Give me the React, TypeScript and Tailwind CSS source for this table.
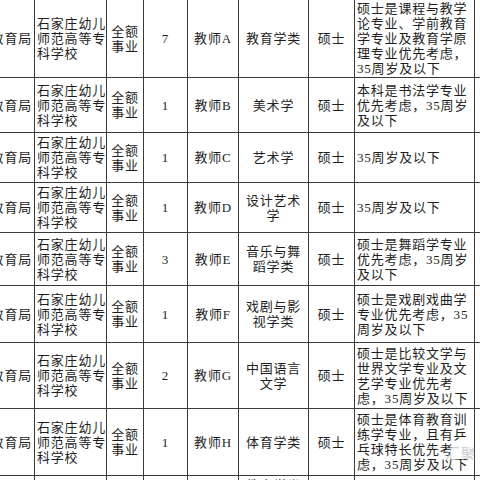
const rows = [
  {
    h: "h-[78px]",
    num: "7",
    post: "教师A",
    major: "教育学类",
    notes: ["硕士是课程与教学", "论专业、学前教育", "学专业及教育学原", "理专业优先考虑，", "35周岁及以下"],
  },
  {
    h: "h-[55px]",
    num: "1",
    post: "教师B",
    major: "美术学",
    notes: ["本科是书法学专业", "优先考虑，35周岁", "及以下"],
  },
  { h: "h-[50px]", num: "1", post: "教师C", major: "艺术学", notes: ["35周岁及以下"] },
  { h: "h-[50px]", num: "1", post: "教师D", major: "设计艺术学", notes: ["35周岁及以下"] },
  {
    h: "h-[53px]",
    num: "3",
    post: "教师E",
    major: "音乐与舞蹈学类",
    notes: ["硕士是舞蹈学专业", "优先考虑，35周岁", "及以下"],
  },
  {
    h: "h-[57px]",
    num: "1",
    post: "教师F",
    major: "戏剧与影视学类",
    notes: ["硕士是戏剧戏曲学", "专业优先考虑，35", "周岁及以下"],
  },
  {
    h: "h-[66px]",
    num: "2",
    post: "教师G",
    major: "中国语言文学",
    notes: ["硕士是比较文学与", "世界文学专业及文", "艺学专业优先考", "虑，35周岁及以下"],
  },
  {
    h: "h-[67px]",
    num: "1",
    post: "教师H",
    major: "体育学类",
    notes: ["硕士是体育教育训", "练学专业，且有乒", "乓球特长优先考", "虑，35周岁及以下"],
  },
];

const cell = "border-r border-[#3a3a3a] flex items-center";

function Lines({ items }: { items: string[] }) {
  return (
    <div>
      {items.map((n) => (
        <div key={n} className="whitespace-nowrap">
          {n}
        </div>
      ))}
    </div>
  );
}

function Row({ r }: { r: (typeof rows)[number] }) {
  return (
    <div
      className={`grid grid-cols-[35px_72px_37px_44px_51px_70px_46px_120px_1fr] border-b border-[#3a3a3a] ${r.h}`}
    >
      <div className={`${cell} justify-end pr-[2px] whitespace-nowrap`}>教育局</div>
      <div className={`${cell} pl-[2px]`}>
        <Lines items={["石家庄幼儿", "师范高等专", "科学校"]} />
      </div>
      <div className={`${cell} justify-center text-center`}>
        <Lines items={["全额", "事业"]} />
      </div>
      <div className={`${cell} justify-center`}>{r.num}</div>
      <div className={`${cell} justify-center whitespace-nowrap`}>{r.post}</div>
      <div className={`${cell} justify-center text-center px-[3px]`}>{r.major}</div>
      <div className={`${cell} justify-center`}>硕士</div>
      <div className={`${cell} pl-[2px]`}>
        <Lines items={r.notes} />
      </div>
      <div />
    </div>
  );
}

export default function App() {
  return (
    <div className="relative w-[480px] h-[480px] overflow-hidden bg-white text-[13px] leading-[15px] tracking-[0.8px] text-[#1e1e1e] font-['Liberation_Serif','Noto_Sans_CJK_SC',serif]">
      {rows.map((r) => (
        <Row key={r.post} r={r} />
      ))}
      <div className="grid grid-cols-[35px_72px_37px_44px_51px_70px_46px_120px_1fr] h-[20px]">
        <div className="border-r border-[#3a3a3a]" />
        <div className="border-r border-[#3a3a3a]" />
        <div className="border-r border-[#3a3a3a]" />
        <div className="border-r border-[#3a3a3a]" />
        <div className="border-r border-[#3a3a3a]" />
        <div className="border-r border-[#3a3a3a] text-center pt-[2px]">教育学类</div>
        <div className="border-r border-[#3a3a3a]" />
        <div className="border-r border-[#3a3a3a]" />
        <div />
      </div>
      {/* watermark */}
      <div className="absolute left-[426px] top-[446px] flex items-center gap-[6px] text-[#a9aeb5] text-[15px] leading-[16px] whitespace-nowrap opacity-60">
        <span className="text-[12px]">⌒</span>
        <span>汇聚</span>
      </div>
    </div>
  );
}
